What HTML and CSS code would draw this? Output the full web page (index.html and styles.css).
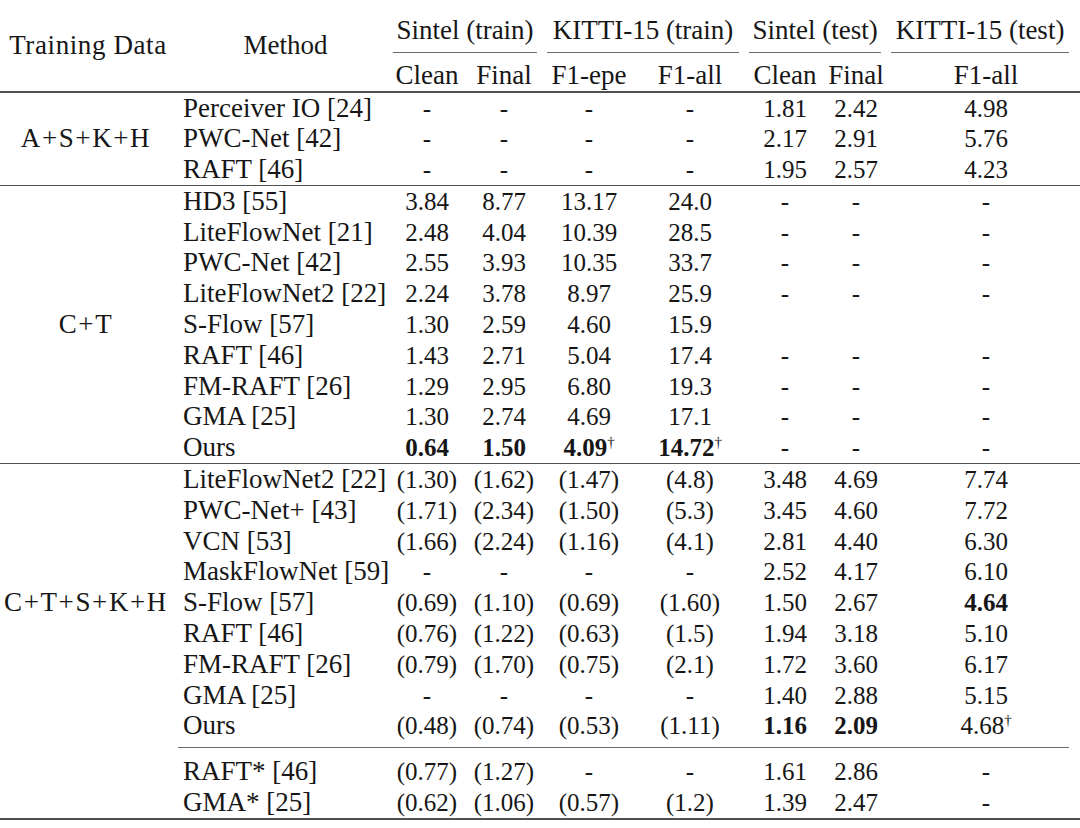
FILE: index.html
```html
<!DOCTYPE html>
<html lang="en">
<head>
<meta charset="utf-8">
<title>Optical flow results</title>
<link rel="stylesheet" href="styles.css">
</head>
<body>
<table class="results">
  <colgroup>
    <col class="w-data"><col class="w-method"><col class="w-c3"><col class="w-c4"><col class="w-c5"><col class="w-c6"><col class="w-c7"><col class="w-c8"><col class="w-c9">
  </colgroup>
  <thead>
    <tr class="h1">
      <th rowspan="2" class="th-data">Training Data</th>
      <th rowspan="2" class="th-method">Method</th>
      <th colspan="2" class="grp"><div class="cm">Sintel (train)</div></th>
      <th colspan="2" class="grp"><div class="cm">KITTI-15 (train)</div></th>
      <th colspan="2" class="grp"><div class="cm">Sintel (test)</div></th>
      <th class="grp grp-last"><div class="cm">KITTI-15 (test)</div></th>
    </tr>
    <tr class="h2">
      <th>Clean</th><th>Final</th><th>F1-epe</th><th>F1-all</th><th>Clean</th><th>Final</th><th class="c9">F1-all</th>
    </tr>
  </thead>
  <tbody>
    <tr class="top">
      <td rowspan="3" class="data">A+S+K+H</td>
      <td class="m">Perceiver IO [24]</td><td class="n">-</td><td class="n">-</td><td class="n">-</td><td class="n">-</td><td class="n">1.81</td><td class="n">2.42</td><td class="n c9">4.98</td>
    </tr>
    <tr><td class="m">PWC-Net [42]</td><td class="n">-</td><td class="n">-</td><td class="n">-</td><td class="n">-</td><td class="n">2.17</td><td class="n">2.91</td><td class="n c9">5.76</td></tr>
    <tr><td class="m">RAFT [46]</td><td class="n">-</td><td class="n">-</td><td class="n">-</td><td class="n">-</td><td class="n">1.95</td><td class="n">2.57</td><td class="n c9">4.23</td></tr>

    <tr class="sep">
      <td rowspan="9" class="data">C+T</td>
      <td class="m">HD3 [55]</td><td class="n">3.84</td><td class="n">8.77</td><td class="n">13.17</td><td class="n">24.0</td><td class="n">-</td><td class="n">-</td><td class="n c9">-</td>
    </tr>
    <tr><td class="m">LiteFlowNet [21]</td><td class="n">2.48</td><td class="n">4.04</td><td class="n">10.39</td><td class="n">28.5</td><td class="n">-</td><td class="n">-</td><td class="n c9">-</td></tr>
    <tr><td class="m">PWC-Net [42]</td><td class="n">2.55</td><td class="n">3.93</td><td class="n">10.35</td><td class="n">33.7</td><td class="n">-</td><td class="n">-</td><td class="n c9">-</td></tr>
    <tr><td class="m">LiteFlowNet2 [22]</td><td class="n">2.24</td><td class="n">3.78</td><td class="n">8.97</td><td class="n">25.9</td><td class="n">-</td><td class="n">-</td><td class="n c9">-</td></tr>
    <tr><td class="m">S-Flow [57]</td><td class="n">1.30</td><td class="n">2.59</td><td class="n">4.60</td><td class="n">15.9</td><td class="n"></td><td class="n"></td><td class="n c9"></td></tr>
    <tr><td class="m">RAFT [46]</td><td class="n">1.43</td><td class="n">2.71</td><td class="n">5.04</td><td class="n">17.4</td><td class="n">-</td><td class="n">-</td><td class="n c9">-</td></tr>
    <tr><td class="m">FM-RAFT [26]</td><td class="n">1.29</td><td class="n">2.95</td><td class="n">6.80</td><td class="n">19.3</td><td class="n">-</td><td class="n">-</td><td class="n c9">-</td></tr>
    <tr><td class="m">GMA [25]</td><td class="n">1.30</td><td class="n">2.74</td><td class="n">4.69</td><td class="n">17.1</td><td class="n">-</td><td class="n">-</td><td class="n c9">-</td></tr>
    <tr><td class="m">Ours</td><td class="n"><b>0.64</b></td><td class="n"><b>1.50</b></td><td class="n"><b>4.09</b><sup class="dg">†</sup></td><td class="n"><b>14.72</b><sup class="dg">†</sup></td><td class="n">-</td><td class="n">-</td><td class="n c9">-</td></tr>

    <tr class="sep">
      <td rowspan="9" class="data">C+T+S+K+H</td>
      <td class="m">LiteFlowNet2 [22]</td><td class="n">(1.30)</td><td class="n">(1.62)</td><td class="n">(1.47)</td><td class="n">(4.8)</td><td class="n">3.48</td><td class="n">4.69</td><td class="n c9">7.74</td>
    </tr>
    <tr><td class="m">PWC-Net+ [43]</td><td class="n">(1.71)</td><td class="n">(2.34)</td><td class="n">(1.50)</td><td class="n">(5.3)</td><td class="n">3.45</td><td class="n">4.60</td><td class="n c9">7.72</td></tr>
    <tr><td class="m">VCN [53]</td><td class="n">(1.66)</td><td class="n">(2.24)</td><td class="n">(1.16)</td><td class="n">(4.1)</td><td class="n">2.81</td><td class="n">4.40</td><td class="n c9">6.30</td></tr>
    <tr><td class="m">MaskFlowNet [59]</td><td class="n">-</td><td class="n">-</td><td class="n">-</td><td class="n">-</td><td class="n">2.52</td><td class="n">4.17</td><td class="n c9">6.10</td></tr>
    <tr><td class="m">S-Flow [57]</td><td class="n">(0.69)</td><td class="n">(1.10)</td><td class="n">(0.69)</td><td class="n">(1.60)</td><td class="n">1.50</td><td class="n">2.67</td><td class="n c9"><b>4.64</b></td></tr>
    <tr><td class="m">RAFT [46]</td><td class="n">(0.76)</td><td class="n">(1.22)</td><td class="n">(0.63)</td><td class="n">(1.5)</td><td class="n">1.94</td><td class="n">3.18</td><td class="n c9">5.10</td></tr>
    <tr><td class="m">FM-RAFT [26]</td><td class="n">(0.79)</td><td class="n">(1.70)</td><td class="n">(0.75)</td><td class="n">(2.1)</td><td class="n">1.72</td><td class="n">3.60</td><td class="n c9">6.17</td></tr>
    <tr><td class="m">GMA [25]</td><td class="n">-</td><td class="n">-</td><td class="n">-</td><td class="n">-</td><td class="n">1.40</td><td class="n">2.88</td><td class="n c9">5.15</td></tr>
    <tr><td class="m">Ours</td><td class="n">(0.48)</td><td class="n">(0.74)</td><td class="n">(0.53)</td><td class="n">(1.11)</td><td class="n"><b>1.16</b></td><td class="n"><b>2.09</b></td><td class="n c9">4.68<sup class="dg">†</sup></td></tr>

    <tr class="cmid"><td></td><td colspan="8"><div class="cmline"></div></td></tr>
    <tr><td></td><td class="m">RAFT* [46]</td><td class="n">(0.77)</td><td class="n">(1.27)</td><td class="n">-</td><td class="n">-</td><td class="n">1.61</td><td class="n">2.86</td><td class="n c9">-</td></tr>
    <tr class="last"><td></td><td class="m">GMA* [25]</td><td class="n">(0.62)</td><td class="n">(1.06)</td><td class="n">(0.57)</td><td class="n">(1.2)</td><td class="n">1.39</td><td class="n">2.47</td><td class="n c9">-</td></tr>
  </tbody>
</table>
</body>
</html>
```

FILE: styles.css
```css
html, body {
  margin: 0;
  padding: 0;
  background: #ffffff;
}

.results {
  width: 1080px;
  table-layout: fixed;
  border-collapse: separate;
  border-spacing: 0;
  font-family: "Liberation Serif", "Times New Roman", serif;
  font-size: 27px;
  color: #161616;
}

.w-data { width: 172px; }
.w-method { width: 216px; }
.w-c3 { width: 78px; }
.w-c4 { width: 76px; }
.w-c5 { width: 94px; }
.w-c6 { width: 108px; }
.w-c7 { width: 82px; }
.w-c8 { width: 60px; }
.w-c9 { width: 194px; }

.results th {
  font-weight: normal;
  padding: 0;
  white-space: nowrap;
  text-align: center;
}

.th-data,
.th-method {
  vertical-align: middle;
  line-height: 30px;
}

.th-data {
  letter-spacing: 0.6px;
  padding-left: 4px !important;
}

.th-method {
  padding-left: 11px !important;
}

.h1 .grp {
  vertical-align: bottom;
  padding: 15px 5px 0 5px;
}

.h1 .grp-last {
  padding-right: 11px;
}

.cm {
  line-height: 30px;
  padding-bottom: 6.5px;
  border-bottom: 1.5px solid #6a6a6a;
}

.h2 th {
  line-height: 30px;
  padding: 7px 0 1px 0;
}

.results .c9 {
  padding-left: 6px;
}

.results td {
  padding: 0;
  line-height: 30.8px;
  text-align: center;
  white-space: nowrap;
  vertical-align: baseline;
}

.results td.data {
  vertical-align: middle;
  letter-spacing: 1.6px;
}

.results td.m {
  text-align: left;
  padding-left: 11px;
}

.results td.n {
  font-size: 25px;
  line-height: 28px;
}

.top td {
  border-top: 2px solid #505050;
}

.sep td {
  border-top: 1.5px solid #505050;
}

.last td {
  border-bottom: 2px solid #505050;
}

.cmid td {
  line-height: 0;
  vertical-align: top;
}

.cmline {
  margin: 6px 11px 8px 6px;
  border-top: 1.5px solid #6a6a6a;
}

.dg {
  font-size: 15px;
  line-height: 0;
  vertical-align: 9px;
  font-weight: normal;
}
```
